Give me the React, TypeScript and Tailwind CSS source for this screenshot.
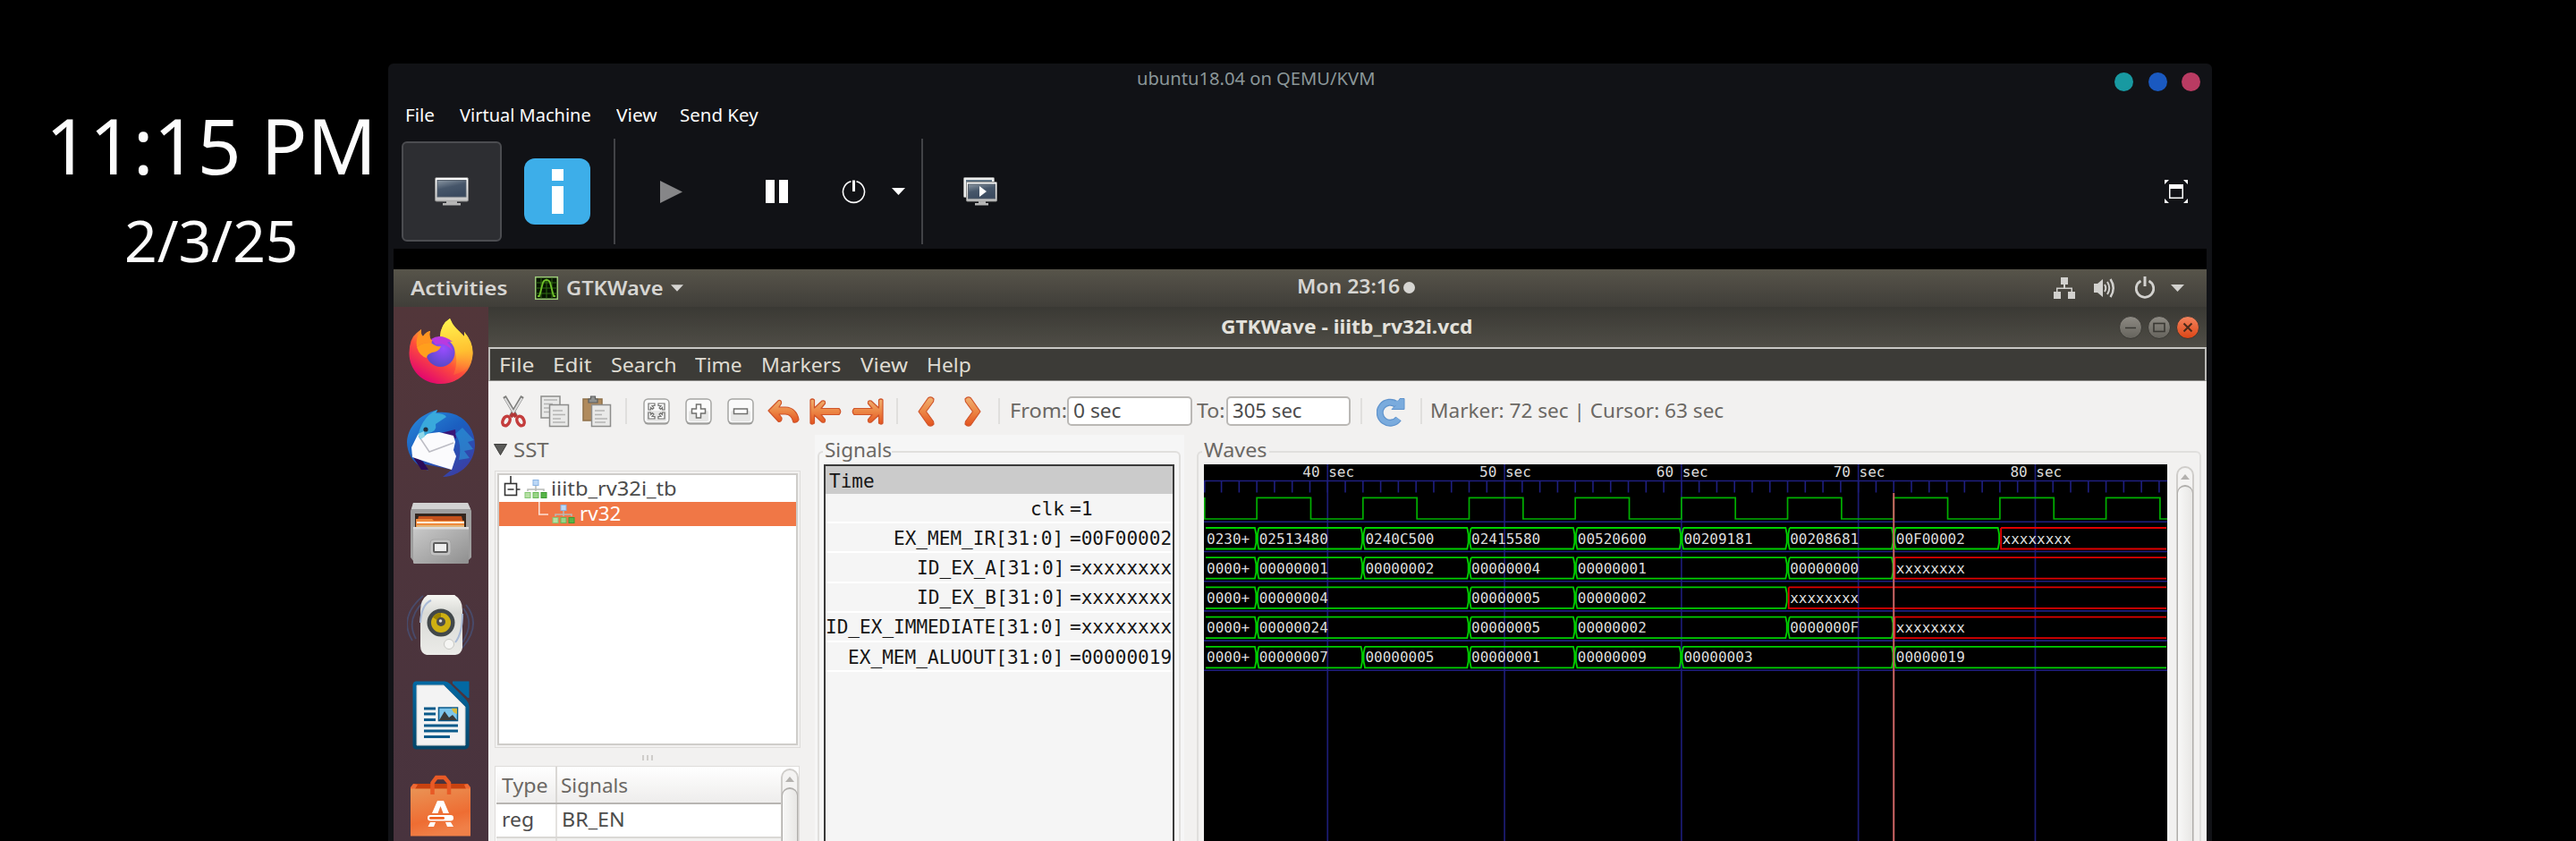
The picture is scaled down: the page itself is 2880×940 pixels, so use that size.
import { ReactNode, useLayoutEffect, useRef, useState } from "react";

/* Text squeezed or stretched horizontally to a known advance width. */
function Fit({ w, className = "", children }: { w: number; className?: string; children: ReactNode }) {
  const ref = useRef<HTMLSpanElement>(null);
  const [scale, setScale] = useState(1);
  useLayoutEffect(() => {
    if (ref.current) setScale(w / ref.current.offsetWidth);
  }, [w]);
  return (
    <span className={`block shrink-0 whitespace-nowrap ${className}`} style={{ width: w }}>
      <span ref={ref} className="inline-block origin-left" style={{ transform: `scaleX(${scale})` }}>
        {children}
      </span>
    </span>
  );
}

const Caret = ({ w = 15, className = "" }: { w?: number; className?: string }) => (
  <svg width={w} height="8" viewBox="0 0 15 8" className={`shrink-0 ${className}`}>
    <path d="M0 0H15L7.5 8Z" fill="currentColor" />
  </svg>
);

const Monitor = () => (
  <svg width="38" height="32" viewBox="0 0 38 32">
    <defs>
      <linearGradient id="scr" x1="0" y1="0" x2="0.4" y2="1">
        <stop offset="0" stopColor="#8b97a3" />
        <stop offset="0.5" stopColor="#46566a" />
        <stop offset="1" stopColor="#3b4b60" />
      </linearGradient>
      <linearGradient id="bez" x1="0" y1="0" x2="0" y2="1">
        <stop offset="0" stopColor="#fff" />
        <stop offset="1" stopColor="#c4c4c4" />
      </linearGradient>
    </defs>
    <rect x="0.5" y="0.5" width="37" height="26.5" rx="1.5" fill="url(#bez)" stroke="#8a8a8a" />
    <rect x="3" y="3.5" width="32" height="18.5" fill="url(#scr)" stroke="#56606c" />
    <path d="M13 27H25V29H29V31.5H9V29H13Z" fill="#b5b5b5" />
  </svg>
);

const Monitors = () => (
  <svg width="38" height="32" viewBox="0 0 38 32">
    <rect x="0.5" y="0.5" width="34" height="22" rx="1" fill="#eceeee" stroke="#9a9a9a" />
    <rect x="3" y="3" width="29" height="17" fill="#5f7384" />
    <rect x="3.5" y="5.5" width="34" height="21.5" rx="1" fill="url(#bez)" stroke="#8a8a8a" />
    <rect x="5.500" y="8" width="30" height="16" fill="url(#scr)" stroke="#56606c" />
    <path d="M18 10L26 16L18 22Z" fill="#fff" />
    <path d="M17 27H25V29H28V31.500H13V29H17Z" fill="#b5b5b5" />
  </svg>
);

function VmToolbar() {
  return (
    <div className="flex h-[131px] items-center pl-[15px] pr-[27px] pt-[3px]">
      <div className="flex h-[112px] w-[112px] items-center justify-center rounded-[6px] border-2 border-[#4b4c50] bg-[#2d2e32]">
        <Monitor />
      </div>
      <div className="ml-[25px] flex h-[74px] w-[74px] flex-col items-center rounded-[12px] bg-[#3daee9] pt-[12px]">
        <div className="h-[13px] w-[13px] bg-white" />
        <div className="mt-[6px] h-[31px] w-[13px] bg-white" />
      </div>
      <div className="ml-[26px] h-[118px] w-[2px] bg-[#424347]" />
      <svg width="25" height="25" viewBox="0 0 25 25" className="ml-[50px]">
        <path d="M0 0L25 12.500L0 25Z" fill="#868688" />
      </svg>
      <div className="ml-[93px] flex gap-[5px]">
        <div className="h-[26px] w-[10px] bg-white" />
        <div className="h-[26px] w-[10px] bg-white" />
      </div>
      <svg width="27" height="27" viewBox="0 0 27 27" className="ml-[60px]" fill="none" stroke="#fcfcfc">
        <path d="M10.500 1.800A12 12 0 1 0 16.500 1.800" strokeWidth="1.600" />
        <path d="M13.500 0.500V13" strokeWidth="3" />
      </svg>
      <Caret className="ml-[29px] text-white" />
      <div className="ml-[18px] h-[118px] w-[2px] bg-[#424347]" />
      <div className="ml-[45px]">
        <Monitors />
      </div>
      <svg width="26" height="26" viewBox="0 0 26 26" className="ml-auto" fill="#fff">
        <path d="M0 0H5L0 5ZM26 0V5L21 0ZM0 26V21L5 26ZM26 26H21L26 21Z" />
        <path d="M5 5H21V21H5ZM6.500 10V19.500H19.500V10Z" fillRule="evenodd" />
      </svg>
    </div>
  );
}

function TopBar() {
  return (
    <div className="flex h-[42px] items-center bg-linear-to-b from-[#57544a] to-[#403e39] pl-[19px] pr-[25px] text-[21px] font-semibold text-[#d6d5d2]">
      <Fit w={109} className="mt-[2px]">Activities</Fit>
      <svg width="26" height="26" viewBox="0 0 26 26" className="ml-[30px]">
        <rect width="26" height="26" fill="#9cc979" />
        <rect x="1.500" y="1.500" width="23" height="23" fill="#061300" />
        <path d="M1.500 7H24.500M1.500 13H24.500M1.500 19H24.500M7 1.500V24.500M13 1.500V24.500M19 1.500V24.500" stroke="#2f6d12" strokeWidth="1" />
        <path d="M3 22H5L9 7Q10 4 13 4Q16 4 17 7L21 22H23" fill="none" stroke="#6fc02a" strokeWidth="1.800" />
      </svg>
      <Fit w={108} className="ml-[9px] mt-[2px]">GTKWave</Fit>
      <Caret w={14} className="ml-[9px]" />
      <Fit w={115} className="mb-[2px] ml-[686px]">Mon 23:16</Fit>
      <div className="mb-[2px] ml-[4px] h-[13px] w-[13px] rounded-full bg-[#d6d5d2]" />
      <svg width="24" height="24" viewBox="0 0 24 24" className="ml-auto" fill="#d2d1ce">
        <path d="M8 0H16V8H13V11.500H21V16H24V24H16V16H19.500V13H4.500V16H8V24H0V16H3V11.500H11V8H8Z" />
      </svg>
      <svg width="25" height="24" viewBox="0 0 25 24" className="ml-[21px]" fill="none" stroke="#d2d1ce" strokeWidth="2">
        <path d="M0 7H4L10 2V22L4 17H0Z" fill="#d2d1ce" stroke="none" />
        <path d="M12 8Q14.500 12 12 16" />
        <path d="M15 5Q19.500 12 15 19" />
        <path d="M18.500 2Q25 12 18.500 22" strokeWidth="2.500" />
      </svg>
      <svg width="22" height="25" viewBox="0 0 22 25" className="mb-[2px] ml-[21px]" fill="none" stroke="#d2d1ce">
        <path d="M6.500 5A9.700 9.700 0 1 0 15.500 5" strokeWidth="2.800" />
        <path d="M11 0V11" strokeWidth="3" />
      </svg>
      <Caret className="ml-[18px] text-[#d2d1ce]" />
    </div>
  );
}

const Firefox = () => (
  <svg width="72" height="74" viewBox="0 0 72 74">
    <defs>
      <linearGradient id="ff" x1="0.8" y1="0.05" x2="0.25" y2="0.95">
        <stop offset="0" stopColor="#fff44f" />
        <stop offset="0.35" stopColor="#ffb02e" />
        <stop offset="0.62" stopColor="#ff4f3a" />
        <stop offset="1" stopColor="#e2066f" />
      </linearGradient>
      <linearGradient id="ffy" x1="0.4" y1="0" x2="0.5" y2="1">
        <stop offset="0" stopColor="#fff44f" />
        <stop offset="0.6" stopColor="#ffc030" />
        <stop offset="1" stopColor="#ff7a35" stopOpacity="0.300" />
      </linearGradient>
      <radialGradient id="ffp" cx="0.6" cy="0.35" r="0.700">
        <stop offset="0" stopColor="#9a4cff" />
        <stop offset="1" stopColor="#5548c4" />
      </radialGradient>
    </defs>
    <path d="M14 12Q13 18 16 20Q19 15 24 14Q22 19 25 24L35 20Q36 6 46 0Q49 8 56 14L62 20L62 15Q72 26 71.500 39C71 60 54 73 36 73C14 73 0 56 0.500 38Q1 22 9 16Z" fill="url(#ff)" />
    <path d="M35 20Q36 6 46 0Q49 8 56 14L62 20L62 15Q71 26 71.500 39C71 52 63 60 50 63Q56 48 51 34Q46 22 35 20Z" fill="url(#ffy)" />
    <circle cx="35.500" cy="38" r="16" fill="url(#ffp)" />
    <path d="M25 23Q36 16 49 26Q46 25 43 27Q47 30 49 36Q40 26 30 29Z" fill="#b93ae0" />
    <path d="M9 32Q14 27 25 27Q30 32 36 31Q34 37 26 38Q20 40 20 44Q12 42 9 32Z" fill="#ff9f1c" />
    <path d="M14 12Q13 18 16 20Q19 15 24 14Q22 19 26 27Q14 27 9 32Q7 22 14 12Z" fill="#ff9420" />
  </svg>
);

const Thunderbird = () => (
  <svg width="76" height="76" viewBox="0 0 76 76">
    <defs>
      <linearGradient id="tb" x1="0" y1="0" x2="0.7" y2="1">
        <stop offset="0" stopColor="#2a8fdd" />
        <stop offset="0.5" stopColor="#1b5fc0" />
        <stop offset="1" stopColor="#3a3fa5" />
      </linearGradient>
    </defs>
    <path d="M34 0L33 3C60 0 76 18 76 40C75 60 60 74 40 75L50 67L16 60L24 68C8 62 0 50 0 36C1 20 12 6 34 0Z" fill="url(#tb)" />
    <path d="M5 50L16 67L24 67L18 58Z" fill="#2b0a58" />
    <path d="M38 26L54 22L55 32L48 30Z" fill="#3a1779" />
    <path d="M12 28L5 42L6 53L30 61L50 67L55 52L52 45L54 36L52 29L36 25Z" fill="#fbfbfd" />
    <path d="M13 29L25 47L52 37" fill="none" stroke="#bcbcc4" strokeWidth="1.500" />
    <path d="M34 0L32 4Q42 4 44 8L32 16Q34 24 24 26L15 33Q10 28 18 14Q24 4 34 0Z" fill="#39a9dc" />
    <path d="M12 27L19 24L20 30L15 33Z" fill="#8fd8ea" />
    <circle cx="21" cy="22" r="2.600" fill="#23303e" />
    <path d="M62 20L75 34L68 36L74 44L64 46L70 54L58 56Q62 38 54 27Z" fill="#2b9ad8" opacity="0.600" />
  </svg>
);

const Files = () => (
  <svg width="68" height="70" viewBox="0 0 68 70">
    <defs>
      <linearGradient id="fl" x1="0" y1="0" x2="1" y2="1">
        <stop offset="0" stopColor="#c9c9c9" />
        <stop offset="1" stopColor="#8f8f8f" />
      </linearGradient>
    </defs>
    <path d="M3 1H64L68 10V62L64 66H3L0 62V10Z" fill="#9e9e9e" />
    <path d="M3 1H64L67 8H1Z" fill="#d2d2d2" />
    <rect x="5" y="13" width="57" height="18" fill="#33261e" />
    <path d="M9 16H57L60 27H6Z" fill="#c4511c" />
    <path d="M6 19H24L26 21H60V29H6Z" fill="#ef8a3c" />
    <path d="M7 22H60V24H7Z" fill="#fff0d8" />
    <path d="M7 26H60V30H7Z" fill="#e3b87c" />
    <rect x="3" y="29" width="62" height="40" rx="1.500" fill="url(#fl)" />
    <rect x="3" y="28" width="62" height="2.500" fill="#dcdcdc" />
    <rect x="22" y="42" width="23" height="18" rx="4" fill="#c2c2c2" stroke="#a4a4a4" />
    <rect x="26" y="46" width="15" height="10" rx="1" fill="#ededed" stroke="#5c5c5c" strokeWidth="2" />
  </svg>
);

const Rhythmbox = () => (
  <svg width="76" height="72" viewBox="0 0 76 72">
    <defs>
      <linearGradient id="rb" x1="0" y1="0" x2="0" y2="1">
        <stop offset="0" stopColor="#f6f6f2" />
        <stop offset="0.3" stopColor="#d9dad6" />
        <stop offset="1" stopColor="#ebebe8" />
      </linearGradient>
    </defs>
    <g fill="none" stroke="#465a88" strokeWidth="1.800" opacity="0.600">
      <path d="M18 4Q-10 28 6 54M19 10Q-2 30 10 52M66 14Q84 36 62 62M63 18Q76 34 62 56" />
    </g>
    <path d="M23 3H53Q62 8 62 20V62Q61 69 54 70H22Q15 68 15 60V20Q15 8 23 3Z" fill="url(#rb)" />
    <path d="M15 34Q16 14 27 9M62 24Q62 46 54 56" fill="none" stroke="#a9bad6" strokeWidth="2" />
    <circle cx="38" cy="34" r="15.500" fill="#42484a" />
    <circle cx="38" cy="34" r="11" fill="#cfb012" />
    <path d="M38 34L29 28A11 11 0 0 1 38 23Z" fill="#9b8200" />
    <circle cx="38" cy="33" r="5" fill="#4c4c4c" />
    <circle cx="37.500" cy="32" r="1.800" fill="#ddd" />
    <circle cx="47" cy="58" r="5.500" fill="#f5f5f3" stroke="#c8c8c4" />
  </svg>
);

const Writer = () => (
  <svg width="64" height="77" viewBox="0 0 64 77">
    <defs>
      <linearGradient id="wr" x1="0" y1="0" x2="0" y2="1">
        <stop offset="0" stopColor="#0369a3" />
        <stop offset="1" stopColor="#054669" />
      </linearGradient>
    </defs>
    <path d="M4 0.500H36Q40 1 43 4L60 21Q63 24 63.500 29V72Q63 76 59 76.500H4Q0.500 76 0.500 72V4Q1 1 4 0.500Z" fill="url(#wr)" />
    <path d="M45 0.500H63.500V19H62L45 3Z" fill="#0369a3" />
    <path d="M5 5H35L59 29V72H5Z" fill="#f3f3f3" stroke="#cfcfcf" />
    <path d="M13 31H26M13 37H26M13 43.500H26M13 50H51M13 56H51M13 62.500H42" stroke="#0b5a8a" strokeWidth="3" />
    <rect x="29.500" y="30" width="21" height="14.500" fill="#7cc4ea" stroke="#0b5a8a" strokeWidth="1.500" />
    <path d="M44 30.800H50V37Q45 36 44 30.800Z" fill="#d9bb3d" />
    <path d="M30 44L36 34L41 41L45 38L50 44Z" fill="#3a3a3a" />
  </svg>
);

const Software = () => (
  <svg width="68" height="70" viewBox="0 0 68 70">
    <defs>
      <linearGradient id="sw" x1="0" y1="0" x2="0.3" y2="1">
        <stop offset="0" stopColor="#ea9355" />
        <stop offset="0.7" stopColor="#ee6d33" />
        <stop offset="1" stopColor="#f08048" />
      </linearGradient>
    </defs>
    <path d="M4 10H63L67 16H0Z" fill="#c9420f" />
    <path d="M3 10L8 11L5 16H0V14ZM64 10L60 11L62 16H67V14Z" fill="#ee6a35" />
    <rect y="15.500" width="67" height="53" fill="url(#sw)" />
    <path d="M24.500 22V9L29 3H38L43 9V22" fill="none" stroke="#e85a26" strokeWidth="4.500" />
    <path d="M30 29H37L43 43H36.500L33.500 35L30.500 43H24Z" fill="#fff" />
    <rect x="19" y="45" width="29" height="6.500" rx="3.200" fill="#fff" />
    <rect x="21" y="47" width="17" height="2.800" rx="1.400" fill="#f0601f" />
    <path d="M22 53H28L26 58H19.500ZM39 53H45L48 58H41Z" fill="#fff" />
  </svg>
);

function Launcher() {
  return (
    <div className="flex w-[106px] shrink-0 flex-col items-center bg-linear-to-b from-[#52363a] to-[#48333e] pr-[1px] pt-[13px]">
      <Firefox />
      <div className="mt-[28px]"><Thunderbird /></div>
      <div className="mt-[27px]"><Files /></div>
      <div className="mt-[31px]"><Rhythmbox /></div>
      <div className="mt-[27px]"><Writer /></div>
      <div className="mt-[28px]"><Software /></div>
    </div>
  );
}

function WindowTitle() {
  return (
    <div className="flex h-[45px] items-center bg-linear-to-b from-[#3a3934] to-[#4f4d46] pl-[819px] pr-[8px] text-[#e4e2dc]">
      <Fit w={281} className="text-[20.5px] font-bold">GTKWave - iiitb_rv32i.vcd</Fit>
      <div className="ml-auto flex gap-[6px]">
        <svg width="26" height="26" viewBox="0 0 26 26">
          <defs>
            <linearGradient id="gb" x1="0" y1="0" x2="0" y2="1">
              <stop offset="0" stopColor="#8e8b84" />
              <stop offset="1" stopColor="#65635c" />
            </linearGradient>
            <linearGradient id="ob" x1="0" y1="0" x2="0" y2="1">
              <stop offset="0" stopColor="#f3855f" />
              <stop offset="1" stopColor="#dc4414" />
            </linearGradient>
          </defs>
          <circle cx="13" cy="13" r="12.500" fill="url(#gb)" stroke="#3a3934" />
          <path d="M7 13.500H19" stroke="#3a3934" strokeWidth="1.500" />
        </svg>
        <svg width="26" height="26" viewBox="0 0 26 26">
          <circle cx="13" cy="13" r="12.500" fill="url(#gb)" stroke="#3a3934" />
          <rect x="7" y="8.500" width="12" height="9" fill="none" stroke="#3a3934" strokeWidth="1.600" />
        </svg>
        <svg width="26" height="26" viewBox="0 0 26 26">
          <circle cx="13" cy="13" r="12.500" fill="url(#ob)" stroke="#3a3934" />
          <path d="M8.500 8.500L17.500 17.500M17.500 8.500L8.500 17.500" stroke="#4a2a1a" strokeWidth="2" />
        </svg>
      </div>
    </div>
  );
}

function MenuBar() {
  return (
    <div className="flex h-[38px] items-center border-x-2 border-b border-t-2 border-x-[#b9b8b5] border-b-[#8b8a87] border-t-[#c9c8c5] bg-[#3c3b37] pl-[10px] pt-[2px] text-[21px] text-[#dfdbd2]">
      <Fit w={40}>File</Fit>
      <Fit w={44} className="ml-[20px]">Edit</Fit>
      <Fit w={73} className="ml-[21px]">Search</Fit>
      <Fit w={53} className="ml-[21px]">Time</Fit>
      <Fit w={89} className="ml-[21px]">Markers</Fit>
      <Fit w={53} className="ml-[22px]">View</Fit>
      <Fit w={50} className="ml-[21px]">Help</Fit>
    </div>
  );
}

const Sep = ({ className = "" }: { className?: string }) => (
  <div className={`h-[29px] w-[2px] shrink-0 bg-[#e0dfdd] ${className}`} />
);

const ZoomButton = ({ className = "", children }: { className?: string; children: ReactNode }) => (
  <svg width="30" height="30" viewBox="0 0 30 30" className={`shrink-0 ${className}`}>
    <rect x="1" y="1.500" width="28" height="28" rx="4.500" fill="#8c8c8a" />
    <rect x="1" y="1" width="28" height="27" rx="4.500" fill="#fafafa" stroke="#a5a5a3" strokeWidth="1.500" />
    <rect x="4" y="14" width="22" height="12" rx="2" fill="#e6e6e5" />
    {children}
  </svg>
);

const orange = { fill: "url(#or)", stroke: "#d0552a", strokeWidth: 1.2, strokeLinejoin: "round" as const };

function Toolbar() {
  return (
    <div className="flex h-[60px] items-center pl-[14px] pt-[7px] text-[21px] text-[#6b6864]">
      <svg width="28" height="36" viewBox="0 0 28 36" fill="none">
        <path d="M4 1L17 23M24 1L11 23" stroke="#7d7d7b" strokeWidth="4" />
        <path d="M4.500 3L16 22M23.500 3L12 22" stroke="#dedede" strokeWidth="2" />
        <path d="M14 20L11 24M14 20L17 24" stroke="#b23838" strokeWidth="4" />
        <ellipse cx="6" cy="28.500" rx="3.800" ry="5.500" transform="rotate(25 6 28.500)" stroke="#c43d3d" strokeWidth="3.500" />
        <ellipse cx="22" cy="28.500" rx="3.800" ry="5.500" transform="rotate(-25 22 28.500)" stroke="#c43d3d" strokeWidth="3.500" />
      </svg>
      <svg width="33" height="36" viewBox="0 0 33 36" className="ml-[16px]">
        <rect x="1" y="1" width="21" height="24" fill="#e9e9e8" stroke="#8d8d8b" strokeWidth="1.500" />
        <path d="M4 5H19M4 9.500H14M4 14H10M4 18.500H10" stroke="#b4b4b2" strokeWidth="1.500" />
        <rect x="10.500" y="10.500" width="21" height="24" fill="#e9e9e8" stroke="#8d8d8b" strokeWidth="1.500" />
        <path d="M14 17H25M14 21.500H28M14 26H23M14 30H28" stroke="#b4b4b2" strokeWidth="1.500" />
      </svg>
      <svg width="33" height="36" viewBox="0 0 33 36" className="ml-[14px]">
        <rect x="1" y="4" width="21" height="24" fill="#b08a5c" stroke="#8f7048" strokeWidth="1.500" />
        <path d="M7 8V4H9.500V1H14.500V4H17V8Z" fill="#8f9190" stroke="#5d5f5e" strokeWidth="1.200" />
        <rect x="10.500" y="10.500" width="21" height="24" fill="#e9e9e8" stroke="#8d8d8b" strokeWidth="1.500" />
        <path d="M14 17H25M14 21.500H22M14 26H28M14 30H26" stroke="#b4b4b2" strokeWidth="1.500" />
      </svg>
      <Sep className="ml-[15px]" />
      <ZoomButton className="ml-[18px]">
        <g fill="#fff" stroke="#70706e" strokeWidth="1.200">
          <path d="M6 6H13V8.500H10L12 11L10.500 12.500L8.500 10.500V13H6ZM24 6H17V8.500H20L18 11L19.500 12.500L21.500 10.500V13H24ZM6 23H13V20.500H10L12 18L10.500 16.500L8.500 18.500V16H6ZM24 23H17V20.500H20L18 18L19.500 16.500L21.500 18.500V16H24Z" />
        </g>
      </ZoomButton>
      <ZoomButton className="ml-[17px]">
        <path d="M12.500 7H17.500V12H22.500V17H17.500V22H12.500V17H7.500V12H12.500Z" fill="#fff" stroke="#70706e" strokeWidth="1.500" />
      </ZoomButton>
      <ZoomButton className="ml-[17px]">
        <rect x="7.500" y="12" width="15" height="5.500" fill="#fff" stroke="#70706e" strokeWidth="1.500" />
      </ZoomButton>
      <svg width="36" height="28" viewBox="0 0 36 28" className="ml-[15px]">
        <defs>
          <linearGradient id="or" x1="0" y1="0" x2="0" y2="1">
            <stop offset="0" stopColor="#f0b070" />
            <stop offset="0.5" stopColor="#ec8645" />
            <stop offset="1" stopColor="#e4521e" />
          </linearGradient>
        </defs>
        <path d="M1 13L12.500 1.500Q16 1 15.500 5L13 9H20C29 9 34 16 35 23Q33 27 29 26Q27 17 20 17H13L16 21Q16.500 25 12.500 25.500Z" {...orange} />
      </svg>
      <svg width="36" height="30" viewBox="0 0 36 30" className="ml-[11px]">
        <path d="M1 2Q3 0 5.500 2V11L14 3Q18 2 17.500 6L13 11.500H33Q36.500 15 33 18.500H13L17.500 24Q18 28 14 27L5.500 19V28Q3 30 1 28Z" {...orange} />
      </svg>
      <svg width="36" height="30" viewBox="0 0 36 30" className="ml-[11px] -scale-x-100">
        <path d="M1 2Q3 0 5.500 2V11L14 3Q18 2 17.500 6L13 11.500H33Q36.500 15 33 18.500H13L17.500 24Q18 28 14 27L5.500 19V28Q3 30 1 28Z" {...orange} />
      </svg>
      <Sep className="ml-[14px]" />
      <svg width="19" height="34" viewBox="0 0 19 34" className="ml-[22px]">
        <path d="M11.500 2Q15 -0.500 18 3L17.500 6L9.500 17L17.500 28L18 31Q15 34.500 11.500 32L1 17Z" {...orange} />
      </svg>
      <svg width="19" height="34" viewBox="0 0 19 34" className="ml-[33px] -scale-x-100">
        <path d="M11.500 2Q15 -0.500 18 3L17.500 6L9.500 17L17.500 28L18 31Q15 34.500 11.500 32L1 17Z" {...orange} />
      </svg>
      <Sep className="ml-[19px]" />
      <Fit w={64} className="ml-[11px]">From:</Fit>
      <div className="flex h-[33px] w-[140px] items-center rounded-[5px] border-2 border-[#bab8b5] bg-white pl-[5px] text-[#4c4c4c]">
        <Fit w={53}>0 sec</Fit>
      </div>
      <Fit w={32} className="ml-[5px]">To:</Fit>
      <div className="ml-[1px] flex h-[33px] w-[139px] items-center rounded-[5px] border-2 border-[#bab8b5] bg-white pl-[5px] text-[#4c4c4c]">
        <Fit w={77}>305 sec</Fit>
      </div>
      <Sep className="ml-[11px]" />
      <svg width="32" height="34" viewBox="0 0 32 34" className="ml-[16px]" fill="none">
        <path d="M22.400 9.200A11.500 11.500 0 1 0 24.500 25" stroke="#5f93cc" strokeWidth="8" />
        <path d="M22.400 9.200A11.500 11.500 0 1 0 24.500 25" stroke="#7aabdd" strokeWidth="5.500" />
        <path d="M17 14.500L21 10.500L20 6L24 6L26 2.500H31V14.500Z" fill="#7aabdd" stroke="#5f93cc" />
        <path d="M19 8.500L26 6" stroke="#7aabdd" strokeWidth="4" />
      </svg>
      <Sep className="ml-[17px]" />
      <Fit w={328} className="ml-[9px]">Marker: 72 sec | Cursor: 63 sec</Fit>
    </div>
  );
}

const Hier = () => (
  <svg width="26" height="22" viewBox="0 0 26 22" className="shrink-0">
    <path d="M13 7V13M4 13V11H22V13" fill="none" stroke="#b8bab6" strokeWidth="1.500" />
    <rect x="10" y="0.500" width="6" height="6" fill="#bcd8f6" stroke="#8ab4e4" />
    <rect x="1" y="14.500" width="6" height="6" fill="#b6e0a4" stroke="#84c874" />
    <rect x="10" y="14.500" width="6" height="6" fill="#9ad488" stroke="#68b858" />
    <rect x="19" y="14.500" width="6" height="6" fill="#58b448" stroke="#3c9a30" />
  </svg>
);

const Scroll = ({ className = "" }: { className?: string }) => (
  <div className={`flex w-[20px] shrink-0 flex-col rounded-t-[10px] border-2 border-b-0 border-[#cfcdca] bg-[#f4f3f2] ${className}`}>
    <div className="flex h-[19px] items-center justify-center text-[#b4b2af]">
      <svg width="10" height="6" viewBox="0 0 10 6"><path d="M5 0L10 6H0Z" fill="currentColor" /></svg>
    </div>
    <div className="-mx-[1px] flex-1 rounded-t-[9px] border-x border-t-2 border-[#b0aeab] bg-linear-to-r from-[#f8f8f7] to-[#e8e7e5]" />
  </div>
);

function TreePane() {
  return (
    <div className="flex w-[365px] shrink-0 flex-col pl-[6px] text-[21px] text-[#4c4c4c]">
      <div className="flex h-[35px] items-center pb-[2px]">
        <svg width="15" height="13" viewBox="0 0 15 13"><path d="M0.500 0.500H14.500L7.500 12.500Z" fill="#5a5a58" stroke="#3c3c3a" /></svg>
        <Fit w={40} className="ml-[7px] mt-[3px] text-[#6b6864]">SST</Fit>
      </div>
      <div className="ml-[1px] mt-[5px] h-[310px] w-[342px] border border-[#dedcda] p-[2px]">
        <div className="flex h-full flex-col border-2 border-[#cfcdca] bg-white">
          <div className="flex h-[30px] items-center pl-[5px] pt-[1px]">
            <svg width="19" height="30" viewBox="0 0 19 30" fill="none" stroke="#333" strokeWidth="1.600">
              <path d="M8 0V8M15 15H18.500M4.500 15H11.500" />
              <rect x="1.500" y="8.500" width="13" height="13" />
            </svg>
            <div className="ml-[4px]"><Hier /></div>
            <Fit w={141} className="ml-[4px]">iiitb_rv32i_tb</Fit>
          </div>
          <div className="flex h-[27px] items-center bg-[#f07746] pl-[44px] text-white">
            <svg width="11" height="27" viewBox="0 0 11 27" className="mr-[4px]"><path d="M0.800 0V14H11" fill="none" stroke="#fbe0d4" strokeWidth="1.600" /></svg>
            <Hier />
            <Fit w={46} className="ml-[5px]">rv32</Fit>
          </div>
        </div>
      </div>
      <div className="ml-[166px] mt-[8px] flex h-[6px] gap-[3px]">
        <div className="w-[2px] bg-[#cfcdca]" />
        <div className="w-[2px] bg-[#cfcdca]" />
        <div className="w-[2px] bg-[#cfcdca]" />
      </div>
      <div className="ml-[1px] mt-[6px] flex w-[341px] flex-1 border border-b-0 border-[#dedcda] bg-white pl-[1px]">
        <div className="flex flex-1 flex-col">
          <div className="flex h-[42px] items-center border-b-2 border-[#b8b5b2] bg-linear-to-b from-white to-[#eeedec] text-[#6b6864]">
            <div className="flex h-full w-[68px] items-center border-r-2 border-[#dad8d5] pl-[6px] pt-[3px]"><Fit w={52}>Type</Fit></div>
            <Fit w={75} className="ml-[4px] mt-[3px]">Signals</Fit>
          </div>
          <div className="flex h-[38px] items-center border-b-2 border-[#dad8d5]">
            <div className="flex h-full w-[68px] items-center border-r-2 border-[#e4e2e0] pl-[6px]"><Fit w={36}>reg</Fit></div>
            <Fit w={71} className="ml-[5px]">BR_EN</Fit>
          </div>
          <div className="flex flex-1 bg-[#f1f0ef]"><div className="w-[68px] border-r-2 border-[#e0deda]" /></div>
        </div>
        <Scroll className="mt-[2px]" />
      </div>
    </div>
  );
}

const SIGNALS = [
  ["clk", "=1"],
  ["EX_MEM_IR[31:0]", "=00F00002"],
  ["ID_EX_A[31:0]", "=xxxxxxxx"],
  ["ID_EX_B[31:0]", "=xxxxxxxx"],
  ["ID_EX_IMMEDIATE[31:0]", "=xxxxxxxx"],
  ["EX_MEM_ALUOUT[31:0]", "=00000019"],
];

function SignalsPane() {
  return (
    <div className="flex w-[413px] shrink-0 flex-col bg-[#f6f6f6] pl-[3px] pr-[4px] pt-[2px]">
      <div className="flex h-[30px] items-start">
        <div className="mt-[16px] h-[14px] w-[6px] rounded-tl-[6px] border-l-2 border-t-2 border-[#e0dfdd]" />
        <Fit w={75} className="ml-[2px] text-[21px] leading-[30px] text-[#6b6864]">Signals</Fit>
        <div className="mt-[16px] h-[14px] flex-1 rounded-tr-[6px] border-r-2 border-t-2 border-[#e0dfdd]" />
      </div>
      <div className="flex flex-1 flex-col border-x-2 border-[#e0dfdd] px-[5px] pt-[1px]">
        <div className="flex flex-1 flex-col border-2 border-b-0 border-[#3a3a3a] bg-[#f5f5f5] font-['DejaVu_Sans_Mono',monospace] text-[21px] text-[#161616]">
          <div className="flex h-[31px] items-center bg-[#cbcbcb] pl-[4px] pt-[5px]">Time</div>
          {SIGNALS.map(([name, value]) => (
            <div key={name} className="flex h-[33.2px] items-center border-b-2 border-white pt-[2px] leading-[30px]">
              <Fit w={name.length * 12.7} className="ml-auto">{name}</Fit>
              <Fit w={value.length * 12.7} className="ml-[6px]">{value}</Fit>
              <span style={{ width: (9 - value.length) * 12.7 + 1 }} />
            </div>
          ))}
        </div>
      </div>
    </div>
  );
}

/* Waveform canvas: seconds on the x axis, one 33.2px row for each signal. */
const PX = 19.78;
const START = 33;
const W = 1077;
const xt = (t: number) => (t - START) * PX - 0.2;

const BUSES: [number, string][][] = [
  [[33, "0230+"], [36, "02513480"], [42, "0240C500"], [48, "02415580"], [54, "00520600"], [60, "00209181"], [66, "00208681"], [72, "00F00002"], [78, "xxxxxxxx"]],
  [[33, "0000+"], [36, "00000001"], [42, "00000002"], [48, "00000004"], [54, "00000001"], [66, "00000000"], [72, "xxxxxxxx"]],
  [[33, "0000+"], [36, "00000004"], [48, "00000005"], [54, "00000002"], [66, "xxxxxxxx"]],
  [[33, "0000+"], [36, "00000024"], [48, "00000005"], [54, "00000002"], [66, "0000000F"], [72, "xxxxxxxx"]],
  [[33, "0000+"], [36, "00000007"], [42, "00000005"], [48, "00000001"], [54, "00000009"], [60, "00000003"], [72, "00000019"]],
];

function busPath(x0: number, x1: number, top: number, first: boolean, last: boolean, bad: boolean) {
  const bot = top + 23.5;
  const right = last ? `H${W - 1}M${W - 1} ${bot}` : `H${x1 - 2.2}L${x1 - 0.8} ${top + 7}V${bot - 7}L${x1 - 2.2} ${bot}`;
  if (first) return `M2 ${top}${right}H2`;
  if (bad) return `M${x0 + 1.2} ${top}${right}H${x0 + 1.2}V${top}`;
  return `M${x0 + 2.2} ${top}${right}H${x0 + 2.2}L${x0 + 0.8} ${bot - 7}V${top + 7}L${x0 + 2.2} ${top}`;
}

function Waves() {
  const ticks = Array.from({ length: 55 }, (_, i) => xt(START + i));
  let clk = `M0.800 37V61`;
  for (let t = 36; t < 88; t += 6) clk += `H${xt(t)}V37.300H${Math.min(xt(t + 3) + 1, W)}V61`;
  clk += `H${W}`;
  return (
    <svg width={W} height="421" viewBox={`0 0 ${W} 421`} className="shrink-0 bg-black">
      <path d={ticks.map((x) => `M${Math.max(x, 0.8)} 18.500V31.500`).join("")} stroke="#1f1f80" strokeWidth="1.600" />
      <path d={[40, 50, 60, 70, 80].map((t) => `M${xt(t)} 0V421`).join("")} stroke="#1c1c74" strokeWidth="1.700" />
      <path d={`M0 18.500H${W}` + [0, 1, 2, 3, 4, 5].map((i) => `M0 ${64.3 + i * 33.2}H${W}`).join("")} stroke="#1f1f80" strokeWidth="1.600" />
      <path d={clk} fill="none" stroke="#00b000" strokeWidth="1.700" />
      {BUSES.map((row, r) =>
        row.map(([t, v], i) => {
          const top = 71 + r * 33.2;
          const bad = v[0] === "x";
          return (
            <g key={`${r}-${t}`}>
              <path d={busPath(xt(t), i + 1 < row.length ? xt(row[i + 1][0]) : W, top, i === 0, i + 1 === row.length, bad)} fill="none" stroke={bad ? "#e00000" : "#00d000"} strokeWidth="1.800" />
              <text x={xt(t) + 2.6 + (i === 0 ? 0.6 : 0)} y={top + 17.5} className="fill-[#dcdcdc] font-['DejaVu_Sans_Mono',monospace] text-[16px]">{v}</text>
            </g>
          );
        })
      )}
      {[40, 50, 60, 70, 80].map((t) => (
        <text key={t} x={xt(t) - 28} y="14" className="fill-[#dcdcdc] font-['DejaVu_Sans_Mono',monospace] text-[16px]">{`${t} sec`}</text>
      ))}
      <path d={`M${xt(72)} 32V421`} stroke="#cc6464" strokeWidth="2" />
    </svg>
  );
}

function WavesPane() {
  return (
    <div className="ml-[14px] mr-[6px] flex flex-1 flex-col pt-[2px]">
      <div className="flex h-[31px] items-start">
        <div className="mt-[16px] h-[15px] w-[6px] rounded-tl-[6px] border-l-2 border-t-2 border-[#e0dfdd]" />
        <Fit w={70} className="ml-[2px] text-[21px] leading-[30px] text-[#6b6864]">Waves</Fit>
        <div className="ml-[3px] mt-[16px] h-[15px] flex-1 rounded-tr-[6px] border-r-2 border-t-2 border-[#e0dfdd]" />
      </div>
      <div className="flex flex-1 border-x-2 border-[#e0dfdd] pl-[6px]">
        <Waves />
        <Scroll className="ml-[10px] mt-[2px]" />
      </div>
    </div>
  );
}

export default function App() {
  return (
    <div className="flex h-[940px] w-[2880px] overflow-hidden bg-black font-['Noto_Sans',sans-serif]">
      <div className="flex w-[434px] shrink-0 flex-col pt-[112px] text-[#fcfcfc]">
        <Fit w={370} className="ml-[51px] text-[86px] leading-[100px]">11:15 PM</Fit>
        <Fit w={195} className="ml-[139px] mt-[16px] text-[64.5px] leading-[80px]">2/3/25</Fit>
      </div>
      <div className="mt-[71px] flex w-[2039px] flex-col rounded-t-[6px] bg-[#111216]">
        <div className="flex h-[40px] items-center pl-[837px] pr-[13px]">
          <Fit w={266} className="mb-[6px] text-[20px] text-[#8b9799]">ubuntu18.04 on QEMU/KVM</Fit>
          <div className="ml-auto flex gap-[16.5px]">
            <div className="h-[21px] w-[21px] rounded-full bg-[#1899a1]" />
            <div className="h-[21px] w-[21px] rounded-full bg-[#1a59c0]" />
            <div className="h-[21px] w-[21px] rounded-full bg-[#b93b62]" />
          </div>
        </div>
        <div className="flex h-[36px] items-center pl-[19px] text-[20px] text-[#fcfcfc]">
          <Fit w={33}>File</Fit>
          <Fit w={147} className="ml-[28px]">Virtual Machine</Fit>
          <Fit w={46} className="ml-[28px]">View</Fit>
          <Fit w={88} className="ml-[25px]">Send Key</Fit>
        </div>
        <VmToolbar />
        <div className="mx-[6px] flex flex-1 flex-col">
          <div className="h-[23px] bg-black" />
          <TopBar />
          <div className="flex flex-1">
            <Launcher />
            <div className="flex flex-1 flex-col bg-[#f2f1f0]">
              <WindowTitle />
              <MenuBar />
              <Toolbar />
              <div className="flex flex-1">
                <TreePane />
                <SignalsPane />
                <WavesPane />
              </div>
            </div>
          </div>
        </div>
      </div>
    </div>
  );
}
